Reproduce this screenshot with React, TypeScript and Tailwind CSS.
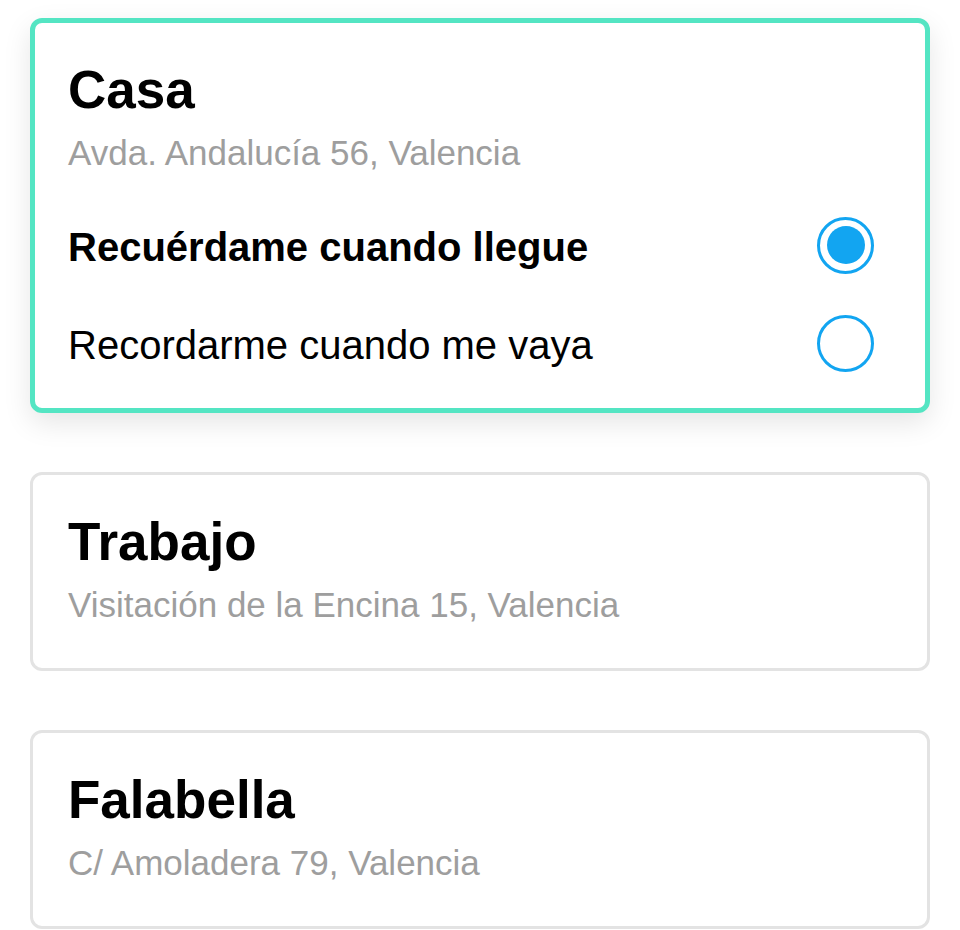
import React from "react";

const font = { fontFamily: '"Liberation Sans", Arial, sans-serif' };

function Radio({ checked }: { checked: boolean }) {
  return (
    <div className="w-[57px] h-[57px] rounded-full border-[3px] border-[#12a5f1] flex items-center justify-center shrink-0">
      {checked && <div className="w-[38px] h-[38px] rounded-full bg-[#12a5f1]" />}
    </div>
  );
}

function PlainCard({ title, address }: { title: string; address: string }) {
  return (
    <div className="rounded-[12px] border-[3px] border-[#e3e3e3] bg-white pl-[35px] pr-[35px] pt-[37px] pb-[43px]">
      <div className="text-[53px] leading-[60px] font-bold text-black">{title}</div>
      <div className="mt-[13px] text-[35px] leading-[40px] text-[#9e9e9e]">{address}</div>
    </div>
  );
}

export default function App() {
  return (
    <div className="min-h-[930px] bg-white px-[30px] pt-[18px] flex flex-col gap-[59px]" style={font}>
      <div className="rounded-[12px] border-[5px] border-[#54e5c3] bg-white pl-[33px] pr-[51px] pt-[37px] pb-[16px] shadow-[0_10px_28px_rgba(0,0,0,0.10)]">
        <div className="text-[53px] leading-[60px] font-bold text-black">Casa</div>
        <div className="mt-[13px] text-[35px] leading-[40px] text-[#9e9e9e]">Avda. Andalucía 56, Valencia</div>
        <div className="mt-[23px]">
          <div className="h-[98px] flex items-center justify-between">
            <span className="text-[40px] leading-[40px] font-bold text-black mt-[3px]">Recuérdame cuando llegue</span>
            <Radio checked />
          </div>
          <div className="h-[98px] flex items-center justify-between">
            <span className="text-[40px] leading-[40px] text-black mt-[3px]">Recordarme cuando me vaya</span>
            <Radio checked={false} />
          </div>
        </div>
      </div>
      <PlainCard title="Trabajo" address="Visitación de la Encina 15, Valencia" />
      <PlainCard title="Falabella" address="C/ Amoladera 79, Valencia" />
    </div>
  );
}
